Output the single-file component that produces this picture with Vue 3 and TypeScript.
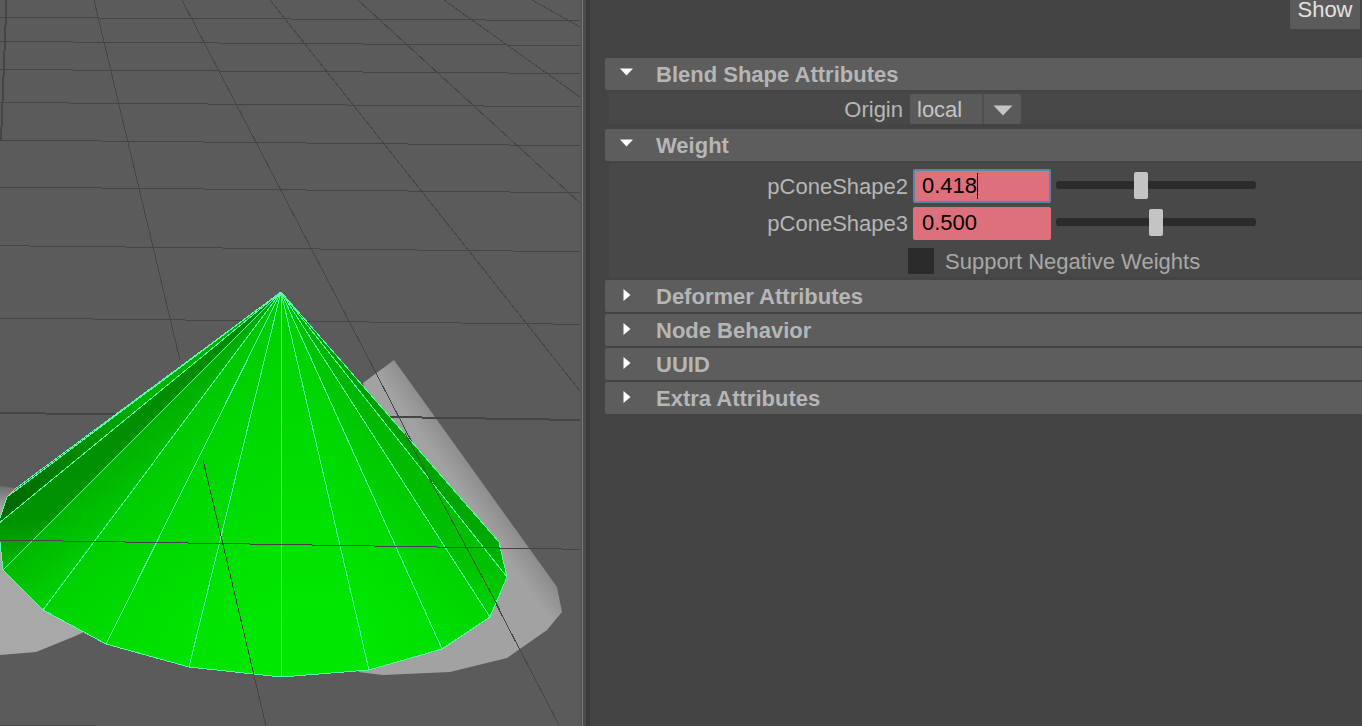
<script setup lang="ts">
type Pt = [number, number];

const apex: Pt = [281, 292];

// rim of the cone from the left silhouette round to the right one, green level per vertex
const rim: { p: Pt; g: number }[] = [
  { p: [7, 497], g: 0x60 },
  { p: [-2, 524], g: 0x98 },
  { p: [3, 570], g: 0xbc },
  { p: [43, 610], g: 0xd2 },
  { p: [106, 644], g: 0xdc },
  { p: [189, 667], g: 0xe4 },
  { p: [281, 677], g: 0xe8 },
  { p: [369, 670], g: 0xe8 },
  { p: [442, 649], g: 0xe0 },
  { p: [490, 617], g: 0xd4 },
  { p: [507, 577], g: 0xc4 },
  { p: [499, 542], g: 0xac },
];

const green = (g: number) => `rgb(0,${g},0)`;

const faces = rim.slice(1).map((v, i) => {
  const prev = rim[i];
  return {
    id: `face${i}`,
    points: [apex, prev.p, v.p].map((q) => q.join(',')).join(' '),
    fill: i === 0 ? 'url(#faceDark)' : `url(#face${i})`,
    from: prev,
    to: v,
  };
});

const outline = [apex, [15, 489] as Pt, ...rim.map((v) => v.p), apex].map((q) => q.join(',')).join(' ');

const floorLines: number[][] = [
  [0, 17.5, 580, 20.5],
  [0, 41.5, 580, 45.5],
  [0, 69.5, 580, 73.5],
  [0, 102.5, 580, 106.7],
  [0, 140, 580, 145.7],
  [0, 187, 580, 192.7],
  [0, 245.7, 580, 251.7],
  [0, 318, 580, 324.3],
  [0, 725, 96, 726],
  [94, 0, 180, 360],
  [182, 0, 559, 725],
  [270, 0, 580, 391],
  [358, 0, 580, 203],
  [444, 0, 580, 97],
  [532, 0, 580, 27],
];

const sections = [
  { title: 'Deformer Attributes' },
  { title: 'Node Behavior' },
  { title: 'UUID' },
  { title: 'Extra Attributes' },
];

const weights = [
  { name: 'pConeShape2', value: '0.418', pos: 42, focused: true },
  { name: 'pConeShape3', value: '0.500', pos: 49.5, focused: false },
];
</script>

<template>
  <div class="app">
    <svg class="viewport" viewBox="0 0 580 726" width="580" height="726">
      <defs>
        <linearGradient
          v-for="f in faces"
          :id="f.id"
          :key="f.id"
          gradientUnits="userSpaceOnUse"
          :x1="f.from.p[0]"
          :y1="f.from.p[1]"
          :x2="f.to.p[0]"
          :y2="f.to.p[1]"
        >
          <stop offset="0" :stop-color="green(f.from.g)" />
          <stop offset="1" :stop-color="green(f.to.g)" />
        </linearGradient>
        <radialGradient id="faceDark" gradientUnits="userSpaceOnUse" cx="10" cy="505" r="170">
          <stop offset="0" stop-color="#006c00" />
          <stop offset="0.45" stop-color="#008c00" />
          <stop offset="1" stop-color="#00c000" />
        </radialGradient>
        <linearGradient id="coneShade" gradientUnits="userSpaceOnUse" x1="0" y1="292" x2="0" y2="620">
          <stop offset="0" stop-color="#000" stop-opacity="0.1" />
          <stop offset="1" stop-color="#000" stop-opacity="0" />
        </linearGradient>
        <linearGradient id="shadowRight" gradientUnits="userSpaceOnUse" x1="462" y1="494" x2="482" y2="480">
          <stop offset="0" stop-color="#a2a2a2" />
          <stop offset="1" stop-color="#8c8c8c" />
        </linearGradient>
        <linearGradient id="shadowLeft" gradientUnits="userSpaceOnUse" x1="0" y1="486" x2="0" y2="510">
          <stop offset="0" stop-color="#6e6e6e" />
          <stop offset="1" stop-color="#a8a8a8" />
        </linearGradient>
      </defs>
      <rect width="580" height="726" fill="#5b5b5b" />
      <polygon points="0,486 15,488 90,600 84,632 73,637 36,652 0,655" fill="url(#shadowLeft)" />
      <polygon points="363,383 394,360 557,587 562,612 547,630 507,658 450,672 383,675 358,672 420,600" fill="url(#shadowRight)" />
      <line
        v-for="(l, i) in floorLines"
        :key="i"
        class="floor"
        :x1="l[0]"
        :y1="l[1]"
        :x2="l[2]"
        :y2="l[3]"
      />
      <line class="floor heavy" x1="6.500" y1="0" x2="1" y2="140" />
      <line class="floor heavy" x1="0" y1="413" x2="135" y2="414.500" />
      <line class="floor heavy" x1="390" y1="417" x2="580" y2="420" />
      <polygon v-for="f in faces" :key="f.id" :points="f.points" :fill="f.fill" />
      <polygon :points="outline" fill="url(#coneShade)" />
      <line
        v-for="(v, i) in rim"
        :key="'w' + i"
        class="wire"
        :x1="apex[0]"
        :y1="apex[1]"
        :x2="v.p[0]"
        :y2="v.p[1]"
      />
      <polyline class="wire" :points="outline" />
      <line class="over" x1="0" y1="540" x2="580" y2="549.300" />
      <line class="over" x1="203" y1="460" x2="266" y2="726" />
      <line class="over thin" x1="405" y1="433" x2="500" y2="610" />
    </svg>

    <div class="splitter"></div>

    <div class="panel">
      <div class="top-row">
        <button class="show-btn">Show</button>
      </div>

      <div class="section">
        <div class="header">
          <svg class="arrow" width="16" height="10" viewBox="0 0 16 10"><path d="M1 1.500h13l-6.500 7z" /></svg>
          <span>Blend Shape Attributes</span>
        </div>
        <div class="body origin-body">
          <span class="label origin-label">Origin</span>
          <div class="select">
            <span class="select-value">local</span>
            <span class="select-btn">
              <svg width="20" height="11" viewBox="0 0 20 11"><path d="M0.500 0.500h19l-9.500 10z" /></svg>
            </span>
          </div>
        </div>
      </div>

      <div class="section last">
        <div class="header">
          <svg class="arrow" width="16" height="10" viewBox="0 0 16 10"><path d="M1 1.500h13l-6.500 7z" /></svg>
          <span>Weight</span>
        </div>
        <div class="body weight-body">
          <div v-for="w in weights" :key="w.name" class="weight-row">
            <span class="label weight-label">{{ w.name }}</span>
            <div class="field" :class="{ focused: w.focused }">
              <span>{{ w.value }}</span><i v-if="w.focused" class="caret"></i>
            </div>
            <div class="slider">
              <div class="handle" :style="{ left: w.pos + '%' }"></div>
            </div>
          </div>
          <div class="check-row">
            <span class="check"></span>
            <span class="check-label">Support Negative Weights</span>
          </div>
        </div>
      </div>

      <div v-for="s in sections" :key="s.title" class="header collapsed">
        <svg class="arrow" width="16" height="14" viewBox="0 0 16 14"><path d="M4.500 1v12l7-6z" /></svg>
        <span>{{ s.title }}</span>
      </div>
    </div>
  </div>
</template>

<style scoped>
.app {
  display: flex;
  width: 1362px;
  height: 726px;
  overflow: hidden;
  background: #444444;
  font-family: "Liberation Sans", Arial, sans-serif;
  font-size: 22px;
}

.viewport {
  display: block;
  flex: none;
}

.floor {
  stroke: #454545;
  stroke-width: 1;
  shape-rendering: crispEdges;
}

.floor.heavy {
  stroke-width: 2;
}

.wire {
  stroke: #55ffaa;
  stroke-width: 1;
  fill: none;
  shape-rendering: crispEdges;
}

.over {
  stroke: #4a404a;
  stroke-width: 1;
  shape-rendering: crispEdges;
}

.over.thin {
  stroke: #3a5a3a;
}

.splitter {
  flex: none;
  width: 10px;
  background: linear-gradient(
    to right,
    #555555 0 2px,
    #7a7a7a 2px 3px,
    #4a4a4a 3px 6px,
    #3a3a3a 6px 10px
  );
}

.panel {
  flex: 1;
  min-width: 0;
  padding-left: 15px;
  background: #444444;
  color: #b6b6b6;
}

.top-row {
  display: flex;
  justify-content: flex-end;
  height: 58px;
  padding-right: 2px;
}

.show-btn {
  width: 70px;
  height: 29px;
  padding: 0 0 9px;
  border: 0;
  background: #5b5b5b;
  color: #e2e2e2;
  font: 22px/20px "Liberation Sans", Arial, sans-serif;
}

.header {
  display: flex;
  align-items: center;
  height: 32px;
  padding-top: 1px;
  box-sizing: border-box;
  background: #5d5d5d;
  border-radius: 2px 0 0 2px;
  font-weight: 700;
  color: #b6b6b6;
}

.header.collapsed {
  margin-bottom: 2px;
  padding-top: 2px;
}

.arrow {
  flex: none;
  margin: -6px 21px 0 14px;
  fill: #ffffff;
}

.collapsed .arrow {
  margin-top: -4px;
}

.section {
  margin-bottom: 5px;
}

.section.last {
  margin-bottom: 3px;
}

.body {
  margin: 2px 0 0 4px;
  background: #484848;
}

.origin-body {
  display: flex;
  align-items: center;
  height: 32px;
}

.origin-label {
  width: 294px;
  text-align: right;
  padding-top: 4px;
}

.select {
  display: flex;
  margin: 2px 0 0 7px;
  width: 111px;
  height: 30px;
  background: #5a5a5a;
  border-radius: 2px;
}

.select-value {
  box-sizing: border-box;
  width: 72px;
  padding-left: 7px;
  line-height: 31px;
  color: #c4c4c4;
}

.select-btn {
  display: flex;
  align-items: center;
  justify-content: center;
  flex: 1;
  border-left: 2px solid #4e4e4e;
  padding-top: 2px;
}

.select-btn path {
  fill: #c4c4c4;
}

.weight-body {
  height: 114px;
  padding-top: 6px;
  box-sizing: border-box;
}

.weight-row {
  display: flex;
  align-items: center;
  height: 34px;
  margin-bottom: 3px;
}

.weight-label {
  width: 299px;
  text-align: right;
  padding-top: 1px;
}

.field {
  flex: none;
  box-sizing: border-box;
  display: flex;
  align-items: center;
  width: 138px;
  height: 33px;
  margin-left: 5px;
  padding-left: 9px;
  background: #de707b;
  border-radius: 2px;
  color: #000000;
}

.field.focused {
  height: 34px;
  border: 2px solid #5b86a8;
  padding-left: 7px;
}

.caret {
  width: 1px;
  height: 26px;
  background: #000000;
}

.slider {
  position: relative;
  flex: none;
  width: 200px;
  height: 8px;
  margin: -2px 0 0 5px;
  background: #2b2b2b;
  border-radius: 3px;
}

.handle {
  position: absolute;
  top: -9px;
  width: 14px;
  height: 27px;
  margin-left: -6px;
  background: #c4c4c4;
  border-radius: 2px;
}

.check-row {
  display: flex;
  align-items: center;
  margin: 8px 0 0 299px;
  height: 26px;
}

.check {
  width: 26px;
  height: 26px;
  background: #2b2b2b;
  border-radius: 1px;
}

.check-label {
  margin-left: 11px;
  padding-top: 1px;
  color: #a8a8a8;
}
</style>
